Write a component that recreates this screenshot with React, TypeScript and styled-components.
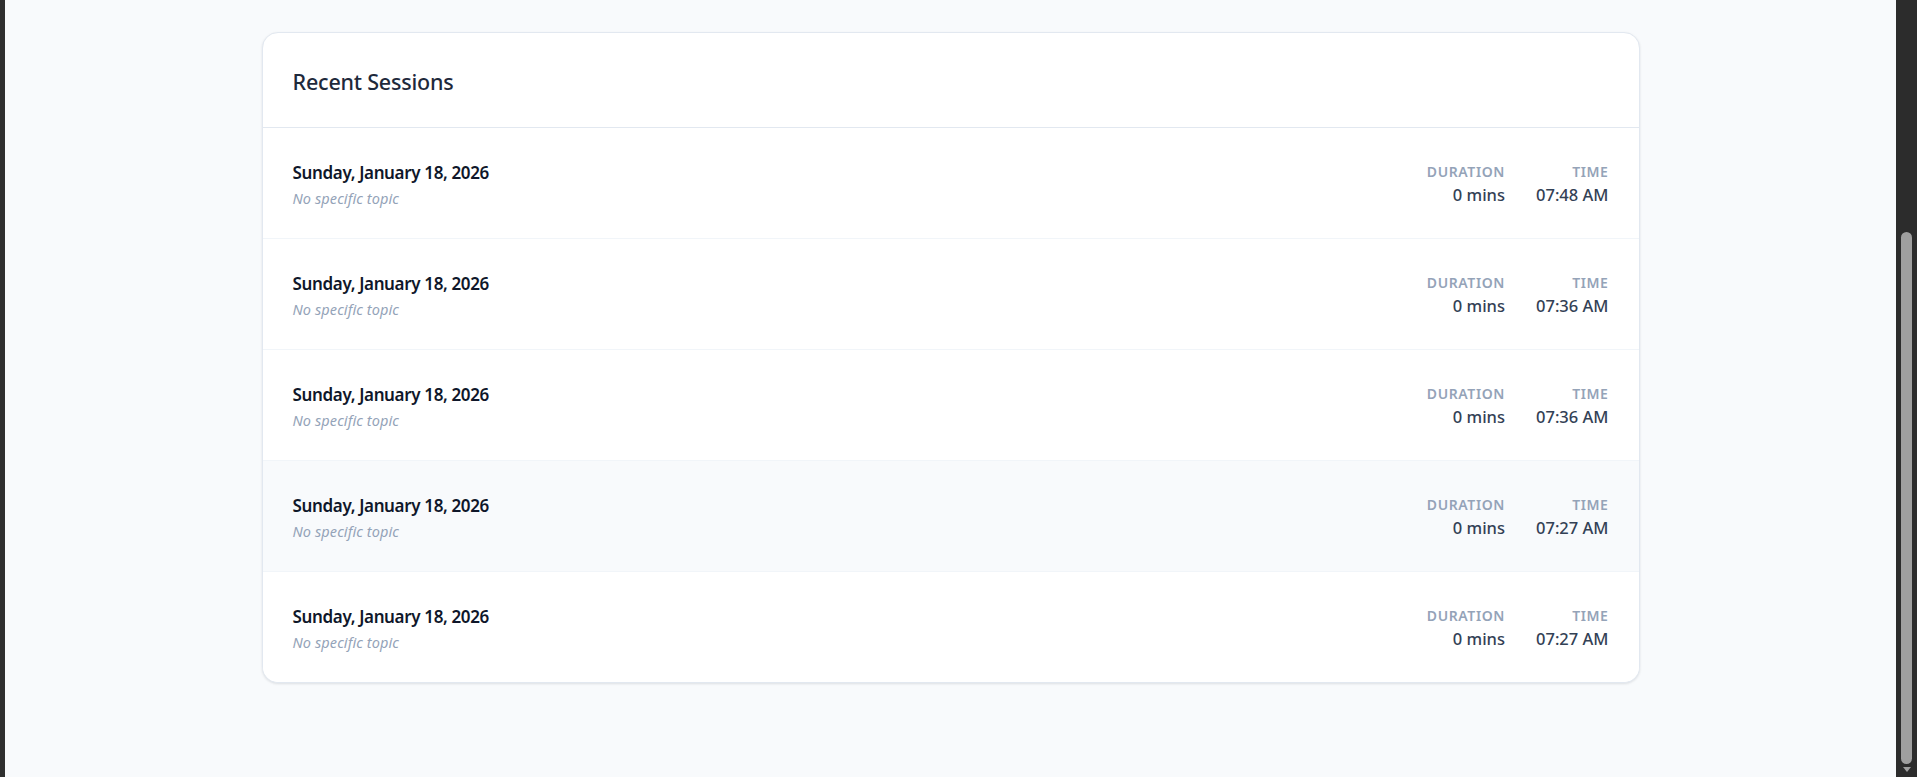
import React from "react";
import styled, { createGlobalStyle } from "styled-components";

const GlobalStyle = createGlobalStyle`
  * { box-sizing: border-box; }
  html, body { margin: 0; padding: 0; height: 100%; overflow: hidden; }
  body {
    font-family: "Noto Sans", "Open Sans", Arial, sans-serif;
    background: #f8fafc;
  }
`;

const Frame = styled.div`
  display: flex;
  height: 100vh;
  background: #2f2f2f;
`;

const EdgeStrip = styled.div`
  width: 5px;
  flex-shrink: 0;
  background: #2f2f2f;
`;

const Page = styled.main`
  flex: 1;
  background: #f8fafc;
  padding-top: 32px;
  display: flex;
  justify-content: center;
  align-items: flex-start;
`;

const ScrollTrack = styled.div`
  width: 21px;
  flex-shrink: 0;
  background: #2c2c2c;
  display: flex;
  flex-direction: column;
  align-items: center;
  padding-top: 232px;
`;

const ScrollThumb = styled.div`
  width: 11px;
  height: 532px;
  border-radius: 6px;
  background: #9f9f9f;
`;

const ScrollArrow = styled.div`
  margin-top: 3px;
  width: 0;
  height: 0;
  border-left: 4px solid transparent;
  border-right: 4px solid transparent;
  border-top: 5px solid #9f9f9f;
`;

const Card = styled.section`
  width: 1378px;
  background: #ffffff;
  border: 1px solid #e2e8f0;
  border-radius: 16px;
  box-shadow: 0 1px 3px rgba(15, 23, 42, 0.08), 0 1px 2px rgba(15, 23, 42, 0.04);
  overflow: hidden;
`;

const CardHeader = styled.header`
  height: 95px;
  padding: 0 30px;
  display: flex;
  align-items: center;
  border-bottom: 1px solid #e2e8f0;
`;

const Title = styled.h2`
  margin: 0;
  padding-top: 2px;
  font-size: 21.5px;
  font-weight: 500;
  color: #1e293b;
  letter-spacing: -0.2px;
`;

const SessionList = styled.ul`
  list-style: none;
  margin: 0;
  padding: 0;
`;

const SessionRow = styled.li<{ $active?: boolean }>`
  height: 111px;
  padding: 0 30px;
  display: flex;
  align-items: center;
  justify-content: space-between;
  background: ${(p) => (p.$active ? "#f8fafc" : "#ffffff")};
  border-bottom: 1px solid #f1f5f9;

  &:last-child {
    height: 110px;
    border-bottom: none;
  }
`;

const Info = styled.div`
  display: flex;
  flex-direction: column;
  gap: 4px;
  padding-top: 2px;
`;

const DateText = styled.div`
  font-size: 17px;
  font-weight: 600;
  color: #0f172a;
  letter-spacing: -0.35px;
`;

const Topic = styled.div`
  font-size: 14.5px;
  font-weight: 400;
  font-style: italic;
  color: #94a3b8;
  letter-spacing: 0.1px;
`;

const Stats = styled.div`
  display: flex;
  gap: 31px;
  padding-top: 2px;
`;

const Stat = styled.div`
  display: flex;
  flex-direction: column;
  align-items: flex-end;
  gap: 2px;
`;

const StatLabel = styled.span`
  font-size: 14px;
  font-weight: 600;
  color: #94a3b8;
  text-transform: uppercase;
  letter-spacing: 0.6px;
`;

const StatValue = styled.span`
  font-size: 16.5px;
  font-weight: 500;
  color: #334155;
`;

const sessions = [
  { date: "Sunday, January 18, 2026", duration: "0 mins", time: "07:48 AM" },
  { date: "Sunday, January 18, 2026", duration: "0 mins", time: "07:36 AM" },
  { date: "Sunday, January 18, 2026", duration: "0 mins", time: "07:36 AM" },
  { date: "Sunday, January 18, 2026", duration: "0 mins", time: "07:27 AM", active: true },
  { date: "Sunday, January 18, 2026", duration: "0 mins", time: "07:27 AM" },
];

export default function App() {
  return (
    <>
      <GlobalStyle />
      <Frame>
        <EdgeStrip />
        <Page>
          <Card>
            <CardHeader>
              <Title>Recent Sessions</Title>
            </CardHeader>
            <SessionList>
              {sessions.map((s, i) => (
                <SessionRow key={i} $active={s.active}>
                  <Info>
                    <DateText>{s.date}</DateText>
                    <Topic>No specific topic</Topic>
                  </Info>
                  <Stats>
                    <Stat>
                      <StatLabel>Duration</StatLabel>
                      <StatValue>{s.duration}</StatValue>
                    </Stat>
                    <Stat>
                      <StatLabel>Time</StatLabel>
                      <StatValue>{s.time}</StatValue>
                    </Stat>
                  </Stats>
                </SessionRow>
              ))}
            </SessionList>
          </Card>
        </Page>
        <ScrollTrack>
          <ScrollThumb />
          <ScrollArrow />
        </ScrollTrack>
      </Frame>
    </>
  );
}
